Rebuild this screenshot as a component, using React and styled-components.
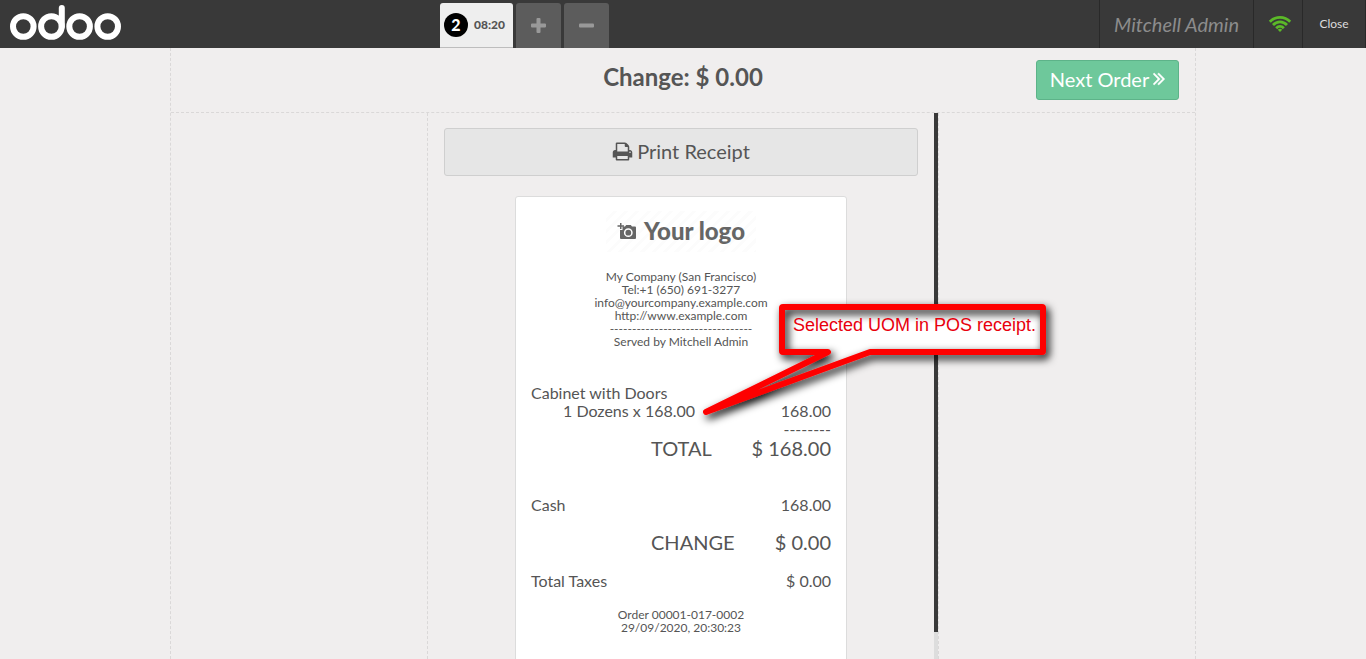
import React from "react";
import styled, { createGlobalStyle } from "styled-components";

const GlobalStyle = createGlobalStyle`
  *, *::before, *::after { box-sizing: border-box; }
  body {
    margin: 0;
    background: #f0eeee;
    color: #555555;
    font-family: Lato, "Open Sans", sans-serif;
    font-size: 16px;
  }
  button { font-family: inherit; cursor: pointer; }
`;

const Page = styled.div`
  display: flex;
  flex-direction: column;
  height: 100vh;
  overflow: hidden;
`;

const TopBar = styled.header`
  display: flex;
  flex: none;
  height: 48px;
  background: #393939;
`;

const Branding = styled.div`
  display: flex;
  align-items: center;
  width: 440px;
  padding-left: 9px;
`;

const OrderTabs = styled.nav`
  display: flex;
  flex: 1;
  align-items: flex-end;
  gap: 3px;
`;

const OrderTab = styled.button`
  display: flex;
  align-items: center;
  gap: 6px;
  width: 73px;
  height: 45px;
  padding: 0 4px 1px;
  border: 0;
  border-bottom: 1px solid #bdbdbd;
  border-radius: 3px 3px 0 0;
  background: #eeeeee;
  color: #555555;
  font-size: 12px;
  font-weight: 900;
`;

const OrderNumber = styled.span`
  flex: none;
  width: 24px;
  border-radius: 50%;
  background: #000000;
  color: #ffffff;
  font-size: 16px;
  line-height: 24px;
  text-align: center;
`;

const TabButton = styled.button`
  display: flex;
  align-items: center;
  justify-content: center;
  width: 45px;
  height: 45px;
  padding: 0;
  border: 0;
  border-radius: 3px 3px 0 0;
  background: #5c5c5c;
`;

const UserName = styled.div`
  padding: 0 14px;
  border-left: 1px solid #292929;
  color: #8c8c8c;
  font-size: 20px;
  font-style: italic;
  line-height: 48px;
`;

const BarButton = styled.button`
  display: flex;
  align-items: center;
  justify-content: center;
  width: ${(p) => p.$width}px;
  padding: 0 0 1px;
  border: 0;
  border-left: 1px solid #292929;
  border-right: ${(p) => (p.$last ? "1px solid #292929" : "0")};
  background: transparent;
  color: #dddddd;
  font-size: 12px;
`;

const StatusButton = styled(BarButton)`
  justify-content: flex-end;
  padding-right: 10px;
`;

const Screen = styled.main`
  position: relative;
  display: flex;
  flex: 1;
  flex-direction: column;
  width: 100%;
  max-width: 1026px;
  min-height: 0;
  margin: 0 auto;
  border: dashed #dad8d8;
  border-width: 0 1px;
`;

const ScreenHeader = styled.div`
  display: grid;
  flex: none;
  grid-template-columns: 1fr 2fr 1fr;
  height: 65px;
  padding-top: 12px;
  border-bottom: 1px dashed #dad8d8;
`;

const ChangeTitle = styled.h1`
  grid-column: 2;
  margin: 0;
  font-size: 24px;
  font-weight: 700;
  line-height: 34px;
  text-align: center;
`;

const NextButton = styled.button`
  display: flex;
  align-items: center;
  justify-content: center;
  justify-self: end;
  gap: 4px;
  width: 143px;
  height: 40px;
  margin-right: 16px;
  padding: 0 0 2px;
  border: 1px solid #5db389;
  border-radius: 3px;
  background: #6ec89b;
  color: #ffffff;
  font-size: 20px;
`;

const Columns = styled.div`
  display: grid;
  flex: 1;
  grid-template-columns: 1fr 2fr 1fr;
  min-height: 0;
`;

const CenterColumn = styled.section`
  display: flex;
  grid-column: 2;
  min-height: 0;
  border: dashed #dad8d8;
  border-width: 0 1px;
`;

const Scroller = styled.div`
  display: flex;
  flex: 1;
  flex-direction: column;
  gap: 20px;
  padding: 15px 16px;
  overflow: hidden;
`;

const ScrollTrack = styled.div`
  flex: none;
  width: 4px;
  background: #dddddd;
`;

const ScrollThumb = styled.div`
  height: 95%;
  background: #393939;
`;

const PrintButton = styled.button`
  display: flex;
  flex: none;
  align-items: center;
  justify-content: center;
  gap: 4px;
  height: 48px;
  padding: 0 0 2px;
  border: 1px solid #cfcfcf;
  border-radius: 3px;
  background: #e6e6e6;
  color: #555555;
  font-size: 20px;
`;

const Receipt = styled.article`
  display: flex;
  flex: none;
  flex-direction: column;
  align-self: center;
  width: 332px;
  min-height: 500px;
  padding: 14px 15px;
  border: 1px solid #dcdcdc;
  border-radius: 3px;
  background: #ffffff;
`;

const CompanyLogo = styled.div`
  display: flex;
  align-items: center;
  align-self: center;
  justify-content: center;
  gap: 7px;
  width: 150px;
  height: 41px;
  margin-bottom: 18px;
  padding-bottom: 2px;
  background: repeating-linear-gradient(135deg, #ffffff 0 5px, #fcfcfc 5px 8px);
  color: #666666;
  font-size: 24px;
  font-weight: 900;
`;

const SmallText = styled.div`
  font-size: 12px;
  line-height: 13px;
  text-align: center;
`;

const Lines = styled.div`
  margin-top: ${(p) => p.$gap}px;
  line-height: 18px;
`;

const Row = styled.div`
  display: flex;
  justify-content: space-between;
  padding-left: ${(p) => p.$indent || 0}px;
`;

const BigRow = styled(Row)`
  margin-top: ${(p) => p.$gap || 0}px;
  padding-left: 120px;
  font-size: 20px;
  line-height: 20px;
`;

const Dashes = styled.div`
  text-align: right;
`;

const Callout = styled.aside`
  position: absolute;
  top: 242px;
  left: 519px;
  width: 370px;
  height: 140px;
  padding: 25px 0 0 103px;
  color: #e8000d;
  font-family: "Liberation Sans", Arial, sans-serif;
  font-size: 18px;
  line-height: 20px;
  white-space: nowrap;
`;

const CalloutShape = styled.svg`
  position: absolute;
  inset: 0;
  overflow: visible;
`;

const CalloutText = styled.span`
  position: relative;
`;

const OdooLogo = () => (
  <svg width="114" height="38" viewBox="0 0 114 38" role="img" aria-label="odoo">
    <g fill="none" stroke="#ffffff" strokeWidth="6">
      <circle cx="14.3" cy="21.5" r="10.3" />
      <circle cx="42.4" cy="21.5" r="10.3" />
      <circle cx="70.6" cy="21.5" r="10.3" />
      <circle cx="98.7" cy="21.5" r="10.3" />
      <path d="M52.8 21.5V3" strokeLinecap="round" />
    </g>
  </svg>
);

const PlusIcon = () => (
  <svg width="15" height="15" viewBox="0 0 15 15" fill="#999999">
    <path d="M6.500 0h2q1 0 1 1v4.500H14q1 0 1 1v2q0 1-1 1H9.500V14q0 1-1 1h-2q-1 0-1-1V9.500H1q-1 0-1-1v-2q0-1 1-1h4.500V1q0-1 1-1z" />
  </svg>
);

const MinusIcon = () => (
  <svg width="15" height="15" viewBox="0 0 15 15" fill="#999999">
    <rect y="5.500" width="15" height="4" rx="1" />
  </svg>
);

const WifiIcon = () => (
  <svg width="24" height="18" viewBox="0 0 24 18" fill="none" stroke="#5bb928" strokeWidth="2.800">
    <path d="M1.800 6.800Q6 2.400 12 2.400T22.200 6.800" />
    <path d="M5 10Q8 6.900 12 6.900T19 10" />
    <path d="M8.200 13.200Q10 11.300 12 11.300T15.800 13.200" />
    <path d="M12 13.800q1.300 0 2.200 1L12 17l-2.200-2.200q.9-1 2.200-1z" fill="#5bb928" stroke="none" />
  </svg>
);

const DoubleAngleIcon = () => (
  <svg width="12" height="20" viewBox="380 130 1010 1660" fill="currentColor" stroke="currentColor" strokeWidth="40">
    <path d="M979 960q0 13-10 23l-466 466q-10 10-23 10t-23-10l-50-50q-10-10-10-23t10-23l393-393-393-393q-10-10-10-23t10-23l50-50q10-10 23-10t23 10l466 466q10 10 10 23zm384 0q0 13-10 23l-466 466q-10 10-23 10t-23-10l-50-50q-10-10-10-23t10-23l393-393-393-393q-10-10-10-23t10-23l50-50q10-10 23-10t23 10l466 466q10 10 10 23z" />
  </svg>
);

const PrintIcon = () => (
  <svg width="21" height="21" viewBox="0 0 1792 1792" fill="currentColor">
    <path d="M448 1536h896v-256h-896v256zm0-640h896v-384h-160q-40 0-68-28t-28-68v-160h-640v640zm1152 64q0-26-19-45t-45-19-45 19-19 45 19 45 45 19 45-19 19-45zm128 0v416q0 13-9.500 22.500t-22.500 9.500h-224v160q0 40-28 68t-68 28h-960q-40 0-68-28t-28-68v-160h-224q-13 0-22.500-9.500t-9.500-22.500v-416q0-79 56.500-135.500t135.500-56.500h64v-544q0-40 28-68t68-28h672q40 0 88 20t76 48l152 152q28 28 48 76t20 88v256h64q79 0 135.500 56.500t56.500 135.500z" />
  </svg>
);

const CameraIcon = () => (
  <svg width="20" height="18" viewBox="0 0 20 18" fill="#666666">
    <path
      fillRule="evenodd"
      d="M5.500 4.500H8L9.200 3h4.600L15 4.500h3q1 0 1 1V16q0 1-1 1H4q-1 0-1-1V8h2.500zM11.300 6.300a4.400 4.400 0 1 0 0 8.800 4.400 4.400 0 0 0 0-8.800zm0 1.500a2.900 2.900 0 1 1 0 5.800 2.900 2.900 0 0 1 0-5.800z"
    />
    <circle cx="11.300" cy="10.700" r="1.900" />
    <path d="M3 1h1.500v2.300H7v1.500H4.500V7H3V4.800H.5V3.300H3z" />
  </svg>
);

const calloutPath =
  "M93 17H352Q353 17 353 18V61Q353 62 352 62H180L16 122L138 62H93Q92 62 92 61V18Q92 17 93 17Z";

export default function App() {
  return (
    <Page>
      <GlobalStyle />
      <TopBar>
        <Branding>
          <OdooLogo />
        </Branding>
        <OrderTabs aria-label="Orders">
          <OrderTab>
            <OrderNumber>2</OrderNumber>
            08:20
          </OrderTab>
          <TabButton aria-label="New order">
            <PlusIcon />
          </TabButton>
          <TabButton aria-label="Delete order">
            <MinusIcon />
          </TabButton>
        </OrderTabs>
        <UserName>Mitchell Admin</UserName>
        <StatusButton $width={49} aria-label="Connection status">
          <WifiIcon />
        </StatusButton>
        <BarButton $width={64} $last>
          Close
        </BarButton>
      </TopBar>

      <Screen>
        <ScreenHeader>
          <ChangeTitle>Change: $ 0.00</ChangeTitle>
          <NextButton>
            Next Order
            <DoubleAngleIcon />
          </NextButton>
        </ScreenHeader>
        <Columns>
          <CenterColumn>
            <Scroller>
              <PrintButton>
                <PrintIcon />
                Print Receipt
              </PrintButton>
              <Receipt>
                <CompanyLogo>
                  <CameraIcon />
                  Your logo
                </CompanyLogo>
                <SmallText>My Company (San Francisco)</SmallText>
                <SmallText>Tel:+1 (650) 691-3277</SmallText>
                <SmallText>info@yourcompany.example.com</SmallText>
                <SmallText>http://www.example.com</SmallText>
                <SmallText>--------------------------------</SmallText>
                <SmallText>Served by Mitchell Admin</SmallText>

                <Lines $gap={36}>
                  <Row>Cabinet with Doors</Row>
                  <Row $indent={32}>
                    <span>1 Dozens x 168.00</span>
                    <span>168.00</span>
                  </Row>
                  <Dashes>--------</Dashes>
                </Lines>
                <BigRow>
                  <span>TOTAL</span>
                  <span>$ 168.00</span>
                </BigRow>
                <Lines $gap={38}>
                  <Row>
                    <span>Cash</span>
                    <span>168.00</span>
                  </Row>
                </Lines>
                <BigRow $gap={18}>
                  <span>CHANGE</span>
                  <span>$ 0.00</span>
                </BigRow>
                <Lines $gap={20}>
                  <Row>
                    <span>Total Taxes</span>
                    <span>$ 0.00</span>
                  </Row>
                </Lines>
                <Lines $gap={18}>
                  <SmallText>Order 00001-017-0002</SmallText>
                  <SmallText>29/09/2020, 20:30:23</SmallText>
                </Lines>
              </Receipt>
            </Scroller>
            <ScrollTrack>
              <ScrollThumb />
            </ScrollTrack>
          </CenterColumn>
        </Columns>

        <Callout>
          <CalloutShape width="370" height="140" viewBox="0 0 370 140" aria-hidden="true">
            <defs>
              <filter id="callout-shadow" x="-10%" y="-10%" width="120%" height="130%">
                <feDropShadow dx="3" dy="4" stdDeviation="4" floodColor="#000000" floodOpacity="1" />
              </filter>
            </defs>
            <path d={calloutPath} fill="#ffffff" />
            <path
              d={calloutPath}
              fill="none"
              stroke="#fe0000"
              strokeWidth="6"
              strokeLinejoin="round"
              filter="url(#callout-shadow)"
            />
          </CalloutShape>
          <CalloutText>Selected UOM in POS receipt.</CalloutText>
        </Callout>
      </Screen>
    </Page>
  );
}
